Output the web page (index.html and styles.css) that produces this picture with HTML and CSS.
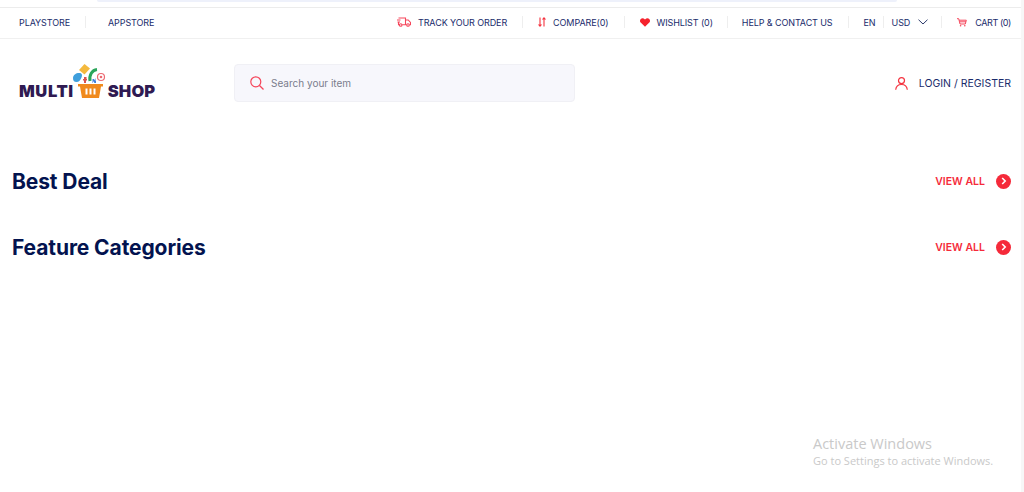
FILE: index.html
```html
<!DOCTYPE html>
<html lang="en">
<head>
<meta charset="utf-8">
<title>Multi Shop</title>
<link rel="stylesheet" href="styles.css">
</head>
<body>
<div class="page">
  <div class="strip"><div class="strip-tab"></div></div>
  <div class="topbar">
    <div class="top-group">
      <a class="top-link">PLAYSTORE</a>
      <span class="sep sep-store"></span>
      <a class="top-link">APPSTORE</a>
    </div>
    <div class="top-group">
      <svg class="ic ic-truck" viewBox="0 0 14 10" fill="none" stroke="#f5455a" stroke-width="1.100"><path d="M1.500 1h7v6.800H5.200M2.200 7.800H1.500V5.500M0 3h3.500M.5 5h2.500M8.500 3h2.700l2.300 2.500v2.300h-1M8.500 7.800h1"/><circle cx="3.700" cy="8" r="1.300"/><circle cx="11" cy="8" r="1.300"/></svg>
      <a class="top-link">TRACK YOUR ORDER</a>
      <span class="sep sep-track"></span>
      <svg class="ic ic-compare" viewBox="0 0 8 10" fill="none" stroke="#f5333f" stroke-width="1.100"><path d="M2 .5V9M.5 7.500 2 9.200 3.500 7.500M6 9.500V1M4.500 2.500 6 .8 7.500 2.500"/></svg>
      <a class="top-link">COMPARE(0)</a>
      <span class="sep sep-compare"></span>
      <svg class="ic ic-heart" viewBox="0 0 10 9"><path fill="#f5222d" d="M5 8.800.7 4.600C-.3 3.500-.2 1.800.8.900 1.900 0 3.600.100 5 1.600 6.400.100 8.100 0 9.200.9c1 .9 1.100 2.600.100 3.700z"/></svg>
      <a class="top-link">WISHLIST (0)</a>
      <span class="sep sep-wish"></span>
      <a class="top-link">HELP &amp; CONTACT US</a>
      <span class="sep sep-help"></span>
      <a class="top-link">EN</a>
      <span class="sep sep-en"></span>
      <a class="top-link">USD</a>
      <svg class="ic ic-chev" viewBox="0 0 10 6" fill="none" stroke="#2c3a6b" stroke-width="1"><path d="M.5.700 5 5 9.500.700"/></svg>
      <span class="sep sep-usd"></span>
      <svg class="ic ic-cart" viewBox="0 0 10 9" fill="none" stroke="#f5455a" stroke-width="1"><path d="M0 .7h1.700l1.300 5.300h5.300l1-3.800H2.200M3 3.800h6"/><circle cx="3.600" cy="7.800" r=".8" fill="#f5455a" stroke="none"/><circle cx="7.800" cy="7.800" r=".8" fill="#f5455a" stroke="none"/></svg>
      <a class="top-link cart-link">CART (0)</a>
    </div>
  </div>
  <header class="header">
    <div class="logo">
      <span class="logo-word logo-multi">MULTI</span>
      <svg class="logo-mark" viewBox="0 0 34 20">
        <path fill="#3f9fdc" d="M1 14c0-3 3-5 6-5s3.500 2 2.500 4.500S7 18 4.500 18 1 16.500 1 14z"/>
        <path fill="#f4b93d" d="M7 6 12.500 0 18 4.500 12.500 10.500z"/>
        <path fill="none" stroke="#2aa55a" stroke-width="3" d="M18 17c-1-6 2-11 7-11.500"/>
        <path fill="#d9534f" d="M12 13h2.500v2H15v1.500h-1V19h-2v-2.500h-1V15h1z"/>
        <path fill="#3f7fdc" d="M20.500 15h1.500l1.500 2v-2.500l.5 0v4.500h-1.500L21 17v2h-.5z"/>
        <circle cx="29" cy="13" r="3.500" fill="none" stroke="#ec6a72" stroke-width="1.200"/>
        <circle cx="29" cy="13" r="1.300" fill="#ec6a72"/>
      </svg>
      <svg class="logo-basket" viewBox="0 0 25 14">
        <path fill="#f08a1d" d="M0 0h25v2.500h-2L21 14H4L2 2.500H0z"/>
        <path fill="#fff" d="M7.500 4.500h2v6h-2zM11.500 4.500h2v6h-2zM15.500 4.500h2v6h-2z"/>
      </svg>
      <span class="logo-word">SHOP</span>
    </div>
    <div class="search">
      <svg class="search-ic" viewBox="0 0 14 14" fill="none" stroke="#f5455a" stroke-width="1.200"><circle cx="5.800" cy="5.800" r="5"/><path d="M9.500 9.500l4 4"/></svg>
      <span class="search-text">Search your item</span>
    </div>
    <div class="account">
      <svg class="user-ic" viewBox="0 0 13 13" fill="none" stroke="#f5333f" stroke-width="1.200"><circle cx="6.500" cy="3.600" r="3"/><path d="M.7 12.800c.3-3.300 2.800-5.300 5.800-5.300s5.500 2 5.800 5.300"/></svg>
      <span class="account-text">LOGIN / REGISTER</span>
    </div>
  </header>
  <section class="sec sec-best">
    <h2 class="sec-title">Best Deal</h2>
    <a class="view-all">VIEW ALL<span class="view-ic"><svg viewBox="0 0 6 8" fill="none" stroke="#fff" stroke-width="1.600"><path d="M1.200 1 4.200 4 1.200 7"/></svg></span></a>
  </section>
  <section class="sec sec-feature">
    <h2 class="sec-title">Feature Categories</h2>
    <a class="view-all">VIEW ALL<span class="view-ic"><svg viewBox="0 0 6 8" fill="none" stroke="#fff" stroke-width="1.600"><path d="M1.200 1 4.200 4 1.200 7"/></svg></span></a>
  </section>
  <div class="activate">
    <div class="activate-title">Activate Windows</div>
    <div class="activate-sub">Go to Settings to activate Windows.</div>
  </div>
</div>
</body>
</html>
```
FILE: styles.css
```css
* { box-sizing: border-box; }
html, body { margin: 0; padding: 0; height: 100%; overflow: hidden; background: #fff; }
body { font-family: Inter, "Liberation Sans", sans-serif; color: #0a1a56; }
.page { position: relative; height: 492px; width: 1024px; border-right: 3px solid #f7f7f7; }
.strip { height: 8px; border-bottom: 1px solid #ececec; padding-left: 97px; }
.strip-tab { width: 800px; height: 2px; background: #eef1fb; border-radius: 0 0 6px 6px; }
.topbar { height: 31px; display: flex; justify-content: space-between; align-items: center; border-bottom: 1px solid #f0f0f0; padding: 0 10px 2px 19px; }
.top-group { display: flex; align-items: center; }
.top-link { font-size: 9px; font-weight: 400; color: #1a2b6b; white-space: nowrap; letter-spacing: -.1px; }
.cart-link { letter-spacing: -.4px; }
.sep { width: 1px; height: 12px; background: #eeeeee; }
.sep-store { margin: 0 22px 0 15px; }
.ic { display: block; flex: none; }
.ic-truck { width: 14px; height: 10px; margin-right: 7px; }
.sep-track { margin: 0 15px 0 15px; }
.ic-compare { width: 8px; height: 10px; margin-right: 7px; }
.sep-compare { margin: 0 15px 0 16px; }
.ic-heart { width: 10px; height: 9px; margin-right: 6px; }
.sep-wish { margin: 0 14px 0 14px; }
.sep-help { margin: 0 15px 0 15px; }
.sep-en { margin: 0 8px 0 7px; }
.ic-chev { width: 10px; height: 6px; margin-left: 8px; }
.sep-usd { margin: 0 15px 0 13px; }
.ic-cart { width: 10px; height: 9px; margin-right: 8px; }
.header { height: 88px; display: flex; align-items: flex-start; padding: 25px 10px 0 19px; }
.logo { width: 215px; height: 37px; display: flex; align-items: flex-end; position: relative; }
.logo-word { font-weight: 900; font-size: 16.500px; line-height: 20px; color: #2f1a52; letter-spacing: .15px; }
.logo-multi { letter-spacing: .6px; }
.logo-mark { position: absolute; left: 53px; top: 0; width: 34px; height: 20px; }
.logo-basket { width: 25px; height: 14px; margin: 0 5px 3px 4px; }
.search { width: 341px; height: 38px; background: #f7f7fc; border: 1px solid #f0f0f5; border-radius: 4px; display: flex; align-items: center; padding-left: 15px; }
.search-ic { width: 14px; height: 14px; margin-right: 7px; }
.search-text { font-size: 10px; color: #7a7d8c; }
.account { margin-left: auto; display: flex; align-items: center; height: 38px; }
.user-ic { width: 13px; height: 13px; margin-right: 11px; }
.account-text { font-size: 10.500px; color: #1a2b6b; }
.sec { display: flex; justify-content: space-between; align-items: center; padding: 0 10px 0 12px; }
.sec-best { height: 30px; margin-top: 39px; }
.sec-feature { height: 30px; margin-top: 36px; }
.sec-title { margin: 0; font-size: 21px; font-weight: 700; color: #03134f; letter-spacing: -.1px; }
.view-all { display: flex; align-items: center; font-size: 10.500px; font-weight: 600; color: #f52a3a; }
.view-ic { width: 15px; height: 15px; border-radius: 50%; background: #f52a3a; margin-left: 11px; display: flex; align-items: center; justify-content: center; }
.view-ic svg { width: 6px; height: 8px; display: block; }
.activate { position: absolute; left: 813px; top: 435px; color: #c9c9c9; font-family: "Open Sans", sans-serif; }
.activate-title { font-size: 14.500px; line-height: 18px; }
.activate-sub { font-size: 11px; line-height: 16px; }
```
